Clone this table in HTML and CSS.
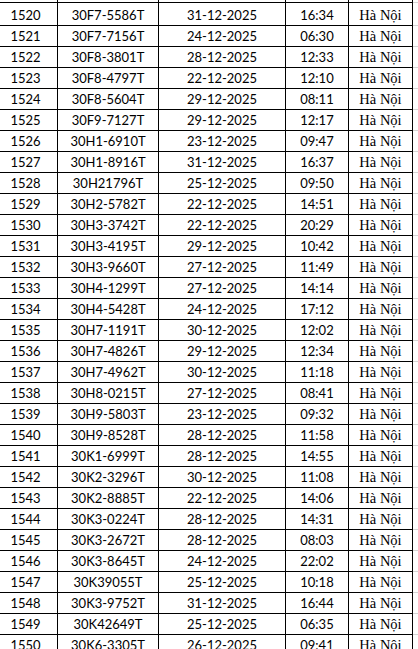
FILE: index.html
```html
<!DOCTYPE html>
<html>
<head>
<meta charset="utf-8">
<link rel="stylesheet" href="styles.css">
</head>
<body>
<div class="sheet" id="sheet">
  <div class="row top"><div class="c c1"></div><div class="c c2"></div><div class="c c3"></div><div class="c c4"></div><div class="c c5"></div><div class="c g"></div></div>
</div>
<script>
var data = [
["1520","30F7-5586T","31-12-2025","16:34"],
["1521","30F7-7156T","24-12-2025","06:30"],
["1522","30F8-3801T","28-12-2025","12:33"],
["1523","30F8-4797T","22-12-2025","12:10"],
["1524","30F8-5604T","29-12-2025","08:11"],
["1525","30F9-7127T","29-12-2025","12:17"],
["1526","30H1-6910T","23-12-2025","09:47"],
["1527","30H1-8916T","31-12-2025","16:37"],
["1528","30H21796T","25-12-2025","09:50"],
["1529","30H2-5782T","22-12-2025","14:51"],
["1530","30H3-3742T","22-12-2025","20:29"],
["1531","30H3-4195T","29-12-2025","10:42"],
["1532","30H3-9660T","27-12-2025","11:49"],
["1533","30H4-1299T","27-12-2025","14:14"],
["1534","30H4-5428T","24-12-2025","17:12"],
["1535","30H7-1191T","30-12-2025","12:02"],
["1536","30H7-4826T","29-12-2025","12:34"],
["1537","30H7-4962T","30-12-2025","11:18"],
["1538","30H8-0215T","27-12-2025","08:41"],
["1539","30H9-5803T","23-12-2025","09:32"],
["1540","30H9-8528T","28-12-2025","11:58"],
["1541","30K1-6999T","28-12-2025","14:55"],
["1542","30K2-3296T","30-12-2025","11:08"],
["1543","30K2-8885T","22-12-2025","14:06"],
["1544","30K3-0224T","28-12-2025","14:31"],
["1545","30K3-2672T","28-12-2025","08:03"],
["1546","30K3-8645T","24-12-2025","22:02"],
["1547","30K39055T","25-12-2025","10:18"],
["1548","30K3-9752T","31-12-2025","16:44"],
["1549","30K42649T","25-12-2025","06:35"],
["1550","30K6-3305T","26-12-2025","09:41"]
];
var s = document.getElementById('sheet');
data.forEach(function(r){
  var row = document.createElement('div');
  row.className = 'row';
  row.innerHTML = '<div class="c c1">'+r[0]+'</div><div class="c c2">'+r[1]+'</div><div class="c c3">'+r[2]+'</div><div class="c c4">'+r[3]+'</div><div class="c c5 serif">Hà Nội</div><div class="c g"></div>';
  s.appendChild(row);
});
</script>
</body>
</html>
```
FILE: styles.css
```css
html, body {
  margin: 0;
  padding: 0;
  background: #fff;
  overflow: hidden;
}
.sheet {
  margin-left: -6px;
  width: 430px;
}
.row {
  display: grid;
  grid-template-columns: 64px 101px 127px 63px 64px 11px;
  height: 21px;
}
.row.top {
  height: 3px;
}
.c {
  box-sizing: border-box;
  border-right: 1px solid #000;
  border-bottom: 1px solid #000;
  font-family: Lato, "Liberation Sans", sans-serif;
  font-size: 13px;
  line-height: 20px;
  padding-top: 2px;
  text-align: center;
  color: #000;
  white-space: nowrap;
  overflow: visible;
}
.serif {
  font-family: "Liberation Serif", "Times New Roman", serif;
  font-size: 14.5px;
}
.c.g {
  border-right: none;
  border-bottom: 1px solid #d4d4d4;
}
```
